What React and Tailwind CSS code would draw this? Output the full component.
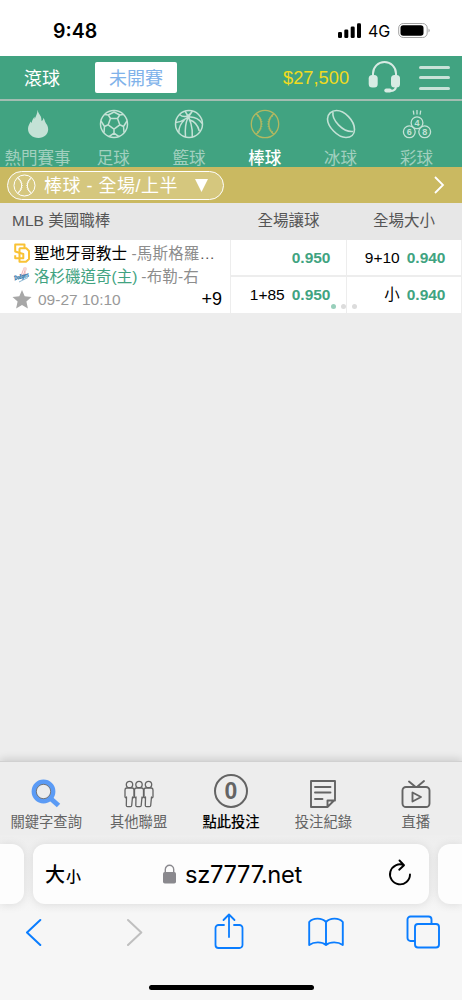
import { clsx } from 'clsx';

const FireIcon = () => (
  <svg width="30" height="30" viewBox="0 0 30 30" fill="currentColor">
    <path d="M14.600.8c.2 3 2.300 4.600 3.200 6.600.7 1.500.5 3 .8 4.700 1.300-.9 1.800-2 1.600-3.400 1.600 1.500 1.400 3 2.200 4.600.9 1.900 2.800 3.400 2.800 7 0 5.200-4.200 8.600-9.600 8.600-6.200 0-10.600-3.700-10.600-9.100 0-3.400 1.600-4.700 2.600-7.400l1.100 1.600c.2-2.400 1.300-4.400 2.800-6.200l.2 2.200C12.700 7.600 14.400 4.600 14.600.8z" />
  </svg>
);

const SoccerIcon = () => (
  <svg width="30" height="30" viewBox="0 0 30 30" fill="none" stroke="currentColor" strokeWidth="1.500" strokeLinejoin="round">
    <circle cx="15" cy="15" r="13.500" />
    <path d="M11.500 9.500h7l2.300 6.300-5.800 4.400-5.800-4.400zM11.500 9.500L9.300 6M18.500 9.500L20.700 6M20.800 15.800l3.700 1.700M15 20.200v4M9.200 15.800l-3.700 1.700M9.300 6L15 3l5.700 3M9.300 6L5.800 5.500M20.700 6l3.500-.5M5.500 17.500L2 12M5.500 17.500l-.5 6M24.500 17.500L28 12M24.500 17.500l.5 6M15 24.200l-5 3.500M15 24.200l5 3.500" />
  </svg>
);

const BasketballIcon = () => (
  <svg width="30" height="30" viewBox="0 0 30 30" fill="none" stroke="currentColor" strokeWidth="1.500">
    <circle cx="15" cy="15" r="13.500" />
    <path d="M1.800 13.500C8.500 12.500 15 9 18.500 2M5.500 5.500c3.500 3 8.500 3.300 13-3.500M11 2c4.500 6.500 8 15 7.300 26.200M14 8.500c-2.500 5.500-3.200 12-2.500 19.500M10.500 11C7 14 4.800 18.500 4.800 23.500M15 8c5-.5 10 2 13.300 6.500M16 11c5 1.500 8 6 9.300 11" />
  </svg>
);

const BaseballIcon = ({ size = 30 }) => (
  <svg width={size} height={size} viewBox="0 0 30 30" fill="none" stroke="currentColor" strokeWidth="1.300">
    <circle cx="15" cy="15" r="13.700" />
    <path d="M6 4.600c7 5 7 15.800 0 20.800M24 4.600c-7 5-7 15.800 0 20.800" />
    <path d="M7.500 6.500c5.500 5 5.500 12 0 17M22.500 6.500c-5.500 5-5.500 12 0 17" strokeWidth="2" strokeDasharray="1 1.300" />
  </svg>
);

const PuckIcon = () => (
  <svg width="30" height="30" viewBox="0 0 30 30" fill="none" stroke="currentColor" strokeWidth="1.600">
    <path d="M10.500 1.500c8 0 18 10 18 19 0 5-3.500 8-8.500 8-8.500 0-18.500-11-18.500-18.500 0-5 4-8.500 9-8.500z" />
    <path d="M7 3c-1.500 8 10 20.500 20 19.500" />
  </svg>
);

const LottoIcon = () => (
  <svg width="30" height="30" viewBox="0 0 30 30" fill="none" stroke="currentColor" strokeWidth="1.300">
    <circle cx="15" cy="13.800" r="5.900" />
    <circle cx="7.300" cy="22.800" r="5.900" />
    <circle cx="22.700" cy="22.800" r="5.900" />
    <path d="M11.300 1.700l.6 4M15 1v4.500M18.700 1.700l-.6 4" />
    <g fill="currentColor" stroke="none" fontSize="9" fontWeight="700" textAnchor="middle">
      <text x="15" y="17">4</text>
      <text x="7.300" y="26">6</text>
      <text x="22.700" y="26">8</text>
    </g>
  </svg>
);

const HeadsetIcon = () => (
  <svg width="32" height="32" viewBox="0 0 32 32" fill="none" className="-mt-[2px] text-[#d8ebe4]" stroke="currentColor" strokeWidth="2">
    <path d="M5 15v-2.500a11.500 11.500 0 0 1 23 0V15M28 25c0 3-2 5-6 5" />
    <rect x=".7" y="14" width="9" height="12.500" rx="3.500" fill="currentColor" stroke="none" />
    <rect x="23" y="14" width="9" height="12.500" rx="3.500" fill="currentColor" stroke="none" />
    <rect x="16.300" y="27.500" width="7.500" height="4" rx="2" fill="currentColor" stroke="none" />
  </svg>
);

const PadresLogo = () => (
  <svg width="17" height="20" viewBox="0 0 17 20" fill="none" stroke="#f9c235" strokeWidth="2" strokeLinejoin="round">
    <path d="M10.500 5V1.500H1.200V8.500L9.300 11v4.200H1.200v-3" />
    <path d="M5.300 5.300H12.300L15 8v8L12 18.800H5.500V5.300" />
  </svg>
);

const DodgersLogo = () => (
  <svg width="20" height="20" viewBox="0 0 20 20" fill="none" overflow="visible">
    <path d="M9 10l3-8M11 10l3-8M13 9V1.500" stroke="#efb2b5" strokeWidth="1" />
    <circle cx="13" cy="3" r="2" fill="#f6d6d7" />
    <text x="2" y="12.500" fontSize="6.500" fontWeight="700" fontStyle="italic" fontFamily="Liberation Serif, serif" textLength="15" lengthAdjust="spacingAndGlyphs" fill="#1f70a8" stroke="#1f70a8" strokeWidth=".3" transform="rotate(-16 9 11)">Dodgers</text>
    <path d="M7 16l9-4.500" stroke="#6da3c6" strokeWidth=".8" />
  </svg>
);

const SearchIcon = () => (
  <svg width="30" height="30" viewBox="0 0 30 30" fill="none">
    <path d="M18.500 18.500l9 8" stroke="#5b9bf5" strokeWidth="5" />
    <circle cx="12.500" cy="12.500" r="9.400" stroke="#5b9bf5" strokeWidth="5" />
    <circle cx="12.500" cy="12.500" r="7.200" stroke="#777" strokeWidth="1" />
  </svg>
);

const PeopleIcon = () => (
  <svg width="30" height="30" viewBox="0 0 30 30" fill="none" stroke="currentColor" strokeWidth="1.300" strokeLinejoin="round">
    {[5.5, 15, 24.5].map(x => (
      <g key={x} transform={`translate(${x} 0)`}>
        <circle cx="0" cy="5.500" r="3.200" />
        <path d="M-3 9h6q1.500.3 1.500 2v7q-.6 1.500-1.500 0l-.8 8.500q-.1 1.200-1.200 1.200H-2q-1.100 0-1.200-1.200L-3 18q-.9 1.500-1.500 0v-7q0-1.700 1.500-2z" />
      </g>
    ))}
  </svg>
);

const RecordIcon = () => (
  <svg width="30" height="30" viewBox="0 0 30 30" fill="none" stroke="currentColor" strokeWidth="1.900" strokeLinejoin="round" strokeLinecap="round">
    <path d="M3 2h24v18.500L19.500 28H3zM27 21.500h-7.500V28M7 8h15.500M7 13.500h15.500M7 20h7.500" />
  </svg>
);

const LiveIcon = () => (
  <svg width="30" height="30" viewBox="0 0 30 30" fill="none" stroke="currentColor" strokeWidth="1.900" strokeLinejoin="round" strokeLinecap="round">
    <rect x="1.500" y="8" width="27" height="20" rx="3.500" />
    <path d="M8 2.500l6 5M23 2l-6.500 5.500M11.500 13.500v9l8.500-4.500z" />
  </svg>
);

const sports = [
  { name: '熱門賽事', Icon: FireIcon },
  { name: '足球', Icon: SoccerIcon },
  { name: '籃球', Icon: BasketballIcon },
  { name: '棒球', Icon: BaseballIcon, active: true },
  { name: '冰球', Icon: PuckIcon },
  { name: '彩球', Icon: LottoIcon },
];

const odds = [
  [{ label: '', value: '0.950' }, { label: '9+10', value: '0.940' }],
  [{ label: '1+85', value: '0.950' }, { label: '小', value: '0.940' }],
];

const tabs = [
  { name: '關鍵字查詢', Icon: SearchIcon },
  { name: '其他聯盟', Icon: PeopleIcon },
  { name: '點此投注', count: 0 },
  { name: '投注紀錄', Icon: RecordIcon },
  { name: '直播', Icon: LiveIcon },
];

function StatusBar() {
  return (
    <div className="flex h-[56px] items-start bg-white pt-[18px] pl-[53px] font-['Inter','Noto_Sans_CJK_TC',sans-serif] text-black">
      <span className="w-[285px] text-[19.500px] leading-[26px] font-semibold">9:48</span>
      <svg width="24" height="26" viewBox="0 0 24 26">
        <rect x="0" y="14" width="4" height="6" rx="1.300" />
        <rect x="6.300" y="11.500" width="4" height="8.500" rx="1.300" />
        <rect x="12.700" y="8.500" width="4" height="11.500" rx="1.300" />
        <rect x="19" y="5.300" width="4" height="14.700" rx="1.300" />
      </svg>
      <span className="ml-[6px] w-[30px] text-[16px] leading-[26px]">4G</span>
      <svg width="34" height="26" viewBox="0 0 34 26">
        <rect x=".7" y="5.500" width="28.500" height="14" rx="4.500" fill="none" stroke="#a3a3a3" />
        <rect x="2.500" y="7.300" width="23" height="10.500" rx="2.700" />
        <path d="M30.500 10.500q2.500 2 0 4z" fill="#a3a3a3" />
      </svg>
    </div>
  );
}

function Header() {
  return (
    <div className="flex h-[45px] items-center border-b-2 border-[#a2bdb2] bg-[#41a381] pl-6 text-[18px]">
      <span className="w-[71px] pt-[3px] text-white">滾球</span>
      <button className="h-[31px] w-[82px] rounded-xs bg-white pt-[3px] text-[#80b2ea]">未開賽</button>
      <span className="ml-[106px] w-[85px] pt-px text-[18.300px] text-[#f1db1e]">$27,500</span>
      <HeadsetIcon />
      <div className="ml-[19px] flex w-[31px] flex-col gap-[7.500px]">
        <i className="h-[3px] rounded-full bg-[#c8e2d8]" />
        <i className="h-[3px] rounded-full bg-[#c8e2d8]" />
        <i className="h-[3px] rounded-full bg-[#c8e2d8]" />
      </div>
    </div>
  );
}

function SportNav() {
  return (
    <div className="flex h-[66px] bg-[#41a381] pt-[8px]">
      {sports.map(({ name, Icon, active }) => (
        <div key={name} className="flex w-[75.800px] shrink-0 flex-col items-center">
          <span className={clsx('h-[30px]', active ? 'text-[#b3b861]' : 'text-[#c4e2d6]')}><Icon /></span>
          <span className={clsx('mt-[7px] pr-px text-[16.500px] leading-[24px] whitespace-nowrap', active ? 'font-medium text-white' : 'text-[#a2d0bf]')}>{name}</span>
        </div>
      ))}
    </div>
  );
}

function FilterBar() {
  return (
    <div className="flex h-[36px] items-center justify-between bg-[#cab961] pr-[17px] pl-[7px] text-white">
      <button className="flex h-[29px] w-[217px] items-center rounded-full border-[1.500px] border-white bg-[#d5c77e] pl-[5px]">
        <BaseballIcon size={23} />
        <span className="ml-[8px] w-[151px] pt-px text-left text-[18px] leading-[24px] tracking-[0.500px] whitespace-nowrap">棒球 - 全場/上半</span>
        <svg width="13" height="13" viewBox="0 0 13 13" fill="currentColor"><path d="M0 0h13L6.500 13z" /></svg>
      </button>
      <svg width="12" height="18" viewBox="0 0 12 18" fill="none" stroke="currentColor" strokeWidth="1.800">
        <path d="M2 1l8 8-8 8" />
      </svg>
    </div>
  );
}

function MatchTable() {
  return (
    <div className="text-[15.500px]">
      <div className="grid h-[37px] grid-cols-[231px_115px_116px] items-center bg-[#e7e7e7] pb-[2px] text-center text-[#555]">
        <span className="pl-[12px] text-left">MLB 美國職棒</span>
        <span>全場讓球</span>
        <span>全場大小</span>
      </div>
      <div className="relative grid h-[73px] grid-cols-[230px_230px] gap-px">
        <div className="flex flex-col bg-white pt-[1.500px] pl-[12px] leading-[23px] text-[#8d8d8d]">
          <div className="flex items-center">
            <span className="w-[22px] pl-[2px]"><PadresLogo /></span>
            <span className="text-black">聖地牙哥教士</span>
            <span className="ml-[4.500px] tracking-[0.150px]">-馬斯格羅<span className="text-[#555]">…</span></span>
          </div>
          <div className="flex items-center">
            <span className="w-[22px]"><DodgersLogo /></span>
            <span className="text-[#41a381]">洛杉磯道奇(主)</span>
            <span className="ml-[4px] tracking-[0.150px]">-布勒-右</span>
          </div>
          <div className="flex items-center pr-[8px]">
            <svg width="20" height="19" viewBox="0 0 20 19" fill="#a7a7a7">
              <path d="M10 0l2.700 6.300 6.800.6-5.100 4.600 1.500 7L10 14.900l-5.900 3.600 1.500-7L.5 6.900l6.800-.6z" />
            </svg>
            <span className="ml-[6px] text-[#999]">09-27 10:10</span>
            <span className="ml-auto text-[18px] text-black">+9</span>
          </div>
        </div>
        <div className="grid grid-cols-[115px_114px] grid-rows-[35px_36px] gap-x-px gap-y-[2px] bg-[#ededed]">
          {odds.flat().map((o, i) => (
            <div key={i} className="flex items-center justify-end gap-[7px] bg-white pr-[15.500px]">
              <span className="text-black">{o.label}</span>
              <b className="text-[#41a381]">{o.value}</b>
            </div>
          ))}
        </div>
        {/* pager dots */}
        <div className="absolute top-[64px] left-[330.500px] flex gap-[5.500px]">
          <i className="size-[5px] rounded-full bg-[#98cfbb]" />
          <i className="size-[5px] rounded-full bg-[#dcdcdc]" />
          <i className="size-[5px] rounded-full bg-[#dcdcdc]" />
        </div>
      </div>
    </div>
  );
}

function BottomTabs() {
  return (
    <div className="grid h-[74px] grid-cols-5 border-t border-[#d1d1d1] bg-[#ededed] text-[14.300px] text-[#646464] shadow-[0_-2px_8px_rgba(0,0,0,0.14)]">
      {tabs.map(({ name, Icon, count }) => (
        <div key={name} className="flex flex-col items-center justify-end pb-[3px]">
          {Icon ? (
            <Icon />
          ) : (
            <span className="flex size-[34px] items-center justify-center rounded-full border-2 border-[#646464] text-[23px] font-bold">{count}</span>
          )}
          <span className={clsx('leading-[20px] whitespace-nowrap', Icon ? 'mt-[3px]' : 'mt-[4px] font-medium text-black')}>{name}</span>
        </div>
      ))}
    </div>
  );
}

function BrowserBar() {
  return (
    <div className="flex h-[165px] flex-col bg-[#f6f6f6] font-['Inter','Noto_Sans_CJK_TC',sans-serif]">
      <div className="flex h-[78px] justify-between overflow-hidden bg-linear-to-b from-[#eee] to-[#f6f6f6] pt-[9px]">
        <div className="h-[60px] w-[24px] rounded-r-xl bg-[#fdfdfd] shadow-[0_1px_10px_rgba(0,0,0,0.1)]" />
        <div className="flex h-[60px] w-[396px] items-center rounded-xl bg-[#fdfdfd] px-[12px] text-black shadow-[0_1px_10px_rgba(0,0,0,0.1)]">
          <span className="flex w-[118px] items-baseline pt-px font-medium">
            <span className="text-[20px]">大</span>
            <span className="ml-px text-[15px]">小</span>
          </span>
          <svg width="13" height="20" viewBox="0 0 13 20" fill="#8a898e">
            <path d="M2.300 9V5.500a4.200 4.200 0 0 1 8.400 0V9" fill="none" stroke="#8a898e" strokeWidth="1.400" />
            <rect y="8" width="13" height="11.500" rx="1.800" />
          </svg>
          <span className="ml-[9px] pt-px text-[23.700px] tracking-[-0.300px]">sz7777.net</span>
          <svg className="-mt-[2px] mr-[5px] ml-auto" width="24" height="28" viewBox="0 0 24 28" fill="none" stroke="currentColor" strokeWidth="1.900" strokeLinecap="round" strokeLinejoin="round">
            <path d="M16 6.200A10 10 0 1 0 22 15.500M11.500 1.500l4.500 4.700-4.800 4.500" />
          </svg>
        </div>
        <div className="h-[60px] w-[24px] rounded-l-xl bg-[#fdfdfd] shadow-[0_1px_10px_rgba(0,0,0,0.1)]" />
      </div>
      <div className="grid h-[38px] grid-cols-[68px_132px_58px_136px_57px] items-center justify-items-center text-[#0a7dff]">
        <svg width="18" height="28" viewBox="0 0 18 28" fill="none" stroke="currentColor" strokeWidth="2" strokeLinecap="round" strokeLinejoin="round"><path d="M15.300 2L2 14.500 15.300 27" /></svg>
        <svg width="18" height="28" viewBox="0 0 18 28" fill="none" stroke="#bfbfbf" strokeWidth="2" strokeLinecap="round" strokeLinejoin="round"><path d="M3 2l13.300 12.500L3 27" /></svg>
        <svg width="32" height="38" viewBox="0 0 32 38" fill="none" stroke="currentColor" strokeWidth="1.800" strokeLinecap="round" strokeLinejoin="round">
          <path d="M11 12H5.500a3 3 0 0 0-3 3v17a3 3 0 0 0 3 3h21a3 3 0 0 0 3-3V15a3 3 0 0 0-3-3H21M16 24V1.500M10.500 7L16 1.500 21.500 7" />
        </svg>
        <svg width="36" height="30" viewBox="0 0 36 30" fill="none" stroke="currentColor" strokeWidth="1.900" strokeLinejoin="round">
          <path d="M18 5C14 .5 5 .5 1.200 5v23C6 24.500 14 24.500 18 28c4-3.500 12-3.500 16.800 0V5C31 .5 22 .5 18 5zv23" />
        </svg>
        <svg width="34" height="34" viewBox="0 0 34 34" fill="none" stroke="currentColor" strokeWidth="1.900">
          <path d="M9 26H4.500a3 3 0 0 1-3-3V4.500a3 3 0 0 1 3-3h18a3 3 0 0 1 3 3V9" />
          <rect x="9" y="9" width="24" height="23.500" rx="3" />
        </svg>
      </div>
      <div className="mx-auto mt-[34px] h-[5px] w-[165px] rounded-full bg-black" />
    </div>
  );
}

export default function App() {
  return (
    <div className="flex h-[1000px] w-[462px] flex-col overflow-hidden bg-[#ededed] font-['Liberation_Sans','Noto_Sans_CJK_TC',sans-serif]">
      <StatusBar />
      <Header />
      <SportNav />
      <FilterBar />
      <MatchTable />
      <div className="flex-1" />
      <BottomTabs />
      <BrowserBar />
    </div>
  );
}
